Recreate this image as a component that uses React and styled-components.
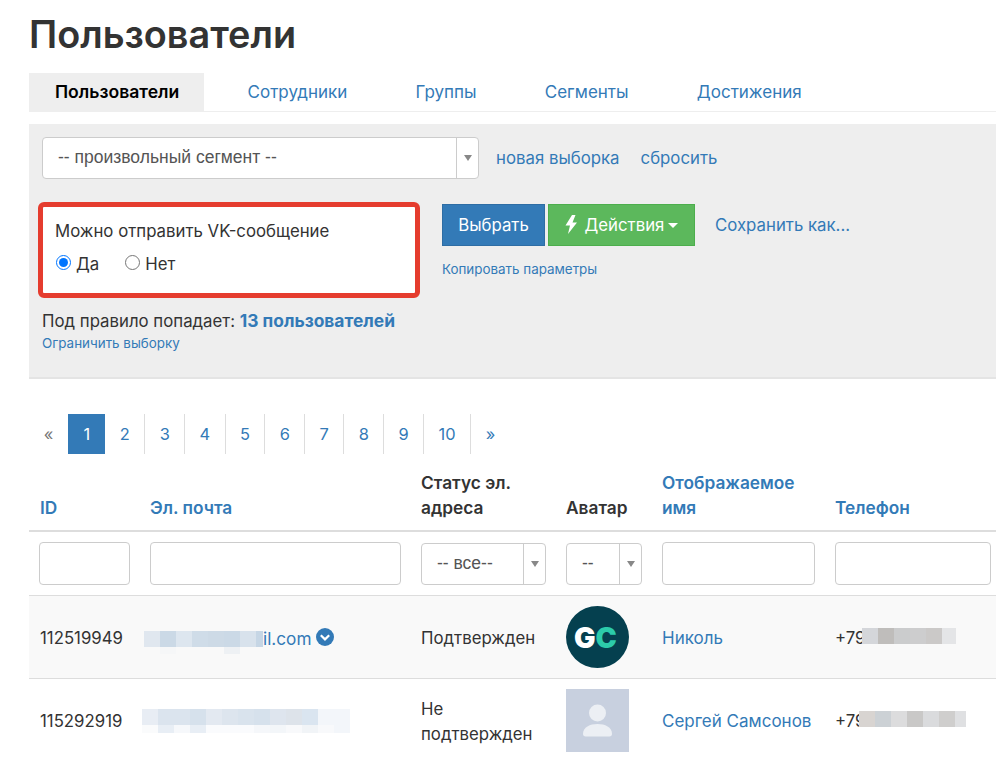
import React from 'react'
import styled, { createGlobalStyle } from 'styled-components'

const TABS = ['Пользователи', 'Сотрудники', 'Группы', 'Сегменты', 'Достижения']
const PAGES = ['1', '2', '3', '4', '5', '6', '7', '8', '9', '10']

const EMAIL_ONE = [
  ['#e0e7ef', '#cbd9e6', '#dde6ef', '#cfdce8', '#cddae6', '#cbd9e6', '#d8e2ec', '#c6d6e5'],
  [null, '#f6f7f8', null, null, null, '#eef1f4', null, null],
]
const EMAIL_TWO = [
  ['#e8edf4', '#dbe4ee', '#dbe4ee', '#d6e1ec', '#e3e9f1', '#dde5ee', '#d9e3ed', '#d6e1ec', '#dee5ee', '#dde3ea', '#dae5f0', '#f3f6fa', '#f3f6fa'],
  ['#fafbfc', '#e8eef5', '#f6f8fb', '#e8eef5', '#fafbfd', '#fafbfd', '#fafbfd', '#f5f7fa', '#f3f6f9', '#f8f9fb', '#f1f4f7', '#f8f9fb', '#f3f6fa'],
]
const PHONE_ONE = [['#d4d6da', '#bfbdbb', '#cbcccd', '#cdcdce', '#cbc9c8', '#e4e5e7']]
const PHONE_TWO = [['#d8d4d1', '#ccd1d5', '#dcdcdd', '#c9c8c7', '#dadbdd', '#cfcecd', '#dfe0e2']]

// pixelated patches over personal data
const Mosaic = ({ rows, width, height }) => (
  <svg width={width} height={height}>
    {rows.map((row, y) =>
      row.map((color, x) =>
        color ? (
          <rect key={x} x={x * 16} y={y * 16} width={16} height={16} fill={color} />
        ) : null
      )
    )}
  </svg>
)

const Select = ({ label, width }) => (
  <SelectBox $width={width}>
    <SelectValue>{label}</SelectValue>
    <SelectArrow />
  </SelectBox>
)

const App = () => (
  <Page>
    <GlobalStyle />
    <Title>Пользователи</Title>
    <Tabs>
      {TABS.map((tab, i) => (
        <Tab key={tab} $active={i === 0}>
          {tab}
        </Tab>
      ))}
    </Tabs>

    <FilterPanel>
      <SegmentRow>
        <Select label='-- произвольный сегмент --' width='437px' />
        <PlainLink>новая выборка</PlainLink>
        <PlainLink>сбросить</PlainLink>
      </SegmentRow>
      <RuleRow>
        <RuleBox>
          <RuleName>Можно отправить VK-сообщение</RuleName>
          <RadioRow>
            <RadioLabel>
              <Radio name='vk' defaultChecked /> Да
            </RadioLabel>
            <RadioLabel>
              <Radio name='vk' /> Нет
            </RadioLabel>
          </RadioRow>
        </RuleBox>
        <div>
          <Buttons>
            <Button $bg='#337ab7' $border='#2e6da4' $width='103px'>
              Выбрать
            </Button>
            <Button $bg='#5cb85c' $border='#4cae4c' $width='147px'>
              <BoltIcon viewBox='0 0 12 19'>
                <path d='M7 0L.5 10.500H5L3 19l9-11.500H7.500L10.500 0z' fill='#fff' />
              </BoltIcon>
              Действия
              <Caret />
            </Button>
            <SaveLink>Сохранить как...</SaveLink>
          </Buttons>
          <SmallLink>Копировать параметры</SmallLink>
        </div>
      </RuleRow>
      <Summary>
        Под правило попадает: <b>13 пользователей</b>
      </Summary>
      <SmallLink>Ограничить выборку</SmallLink>
    </FilterPanel>

    <Pagination>
      <PageEdge>«</PageEdge>
      {PAGES.map(p => (
        <PageItem key={p} $active={p === '1'}>
          {p}
        </PageItem>
      ))}
      <PageEdge>»</PageEdge>
    </Pagination>

    <Table>
      <colgroup>
        <col width='111' />
        <col width='271' />
        <col width='145' />
        <col width='96' />
        <col width='173' />
        <col width='176' />
      </colgroup>
      <thead>
        <tr>
          <Th $link>ID</Th>
          <Th $link>Эл. почта</Th>
          <Th>Статус эл. адреса</Th>
          <Th>Аватар</Th>
          <Th $link>Отображаемое имя</Th>
          <Th $link>Телефон</Th>
        </tr>
        <tr>
          <Td><FilterInput /></Td>
          <Td><FilterInput /></Td>
          <Td><Select label='-- все--' width='125px' /></Td>
          <Td><Select label='--' width='76px' /></Td>
          <Td><FilterInput /></Td>
          <Td><FilterInput /></Td>
        </tr>
      </thead>
      <tbody>
        <Row $striped>
          <BodyTd>112519949</BodyTd>
          <BodyTd>
            <EmailCell>
              <EmailPatch>
                <Mosaic rows={EMAIL_ONE} width={119} height={23} />
              </EmailPatch>
              il.com
              <VerifiedIcon viewBox='0 0 18 18'>
                <circle cx='9' cy='9' r='9' fill='#337ab7' />
                <path d='M4.800 7.200l4.200 4.200 4.200-4.200' fill='none' stroke='#fff' strokeWidth='2.200' />
              </VerifiedIcon>
            </EmailCell>
          </BodyTd>
          <BodyTd>Подтвержден</BodyTd>
          <Td>
            <LogoAvatar viewBox='0 0 63 62'>
              <ellipse cx='31.500' cy='31' rx='31.500' ry='31' fill='#05404f' />
              <LogoText x='8' y='41.500' fill='#fff'>
                G<tspan fill='#2ccbaa'>C</tspan>
              </LogoText>
            </LogoAvatar>
          </Td>
          <BodyTd><NameLink>Николь</NameLink></BodyTd>
          <BodyTd>
            <PhoneCell>
              +79
              <PhonePatch $left='27px'>
                <Mosaic rows={PHONE_ONE} width={94} height={16} />
              </PhonePatch>
            </PhoneCell>
          </BodyTd>
        </Row>
        <Row>
          <BodyTd>115292919</BodyTd>
          <BodyTd>
            <EmailCell $offset='-8px'>
              <EmailPatch $top='0'>
                <Mosaic rows={EMAIL_TWO} width={208} height={24} />
              </EmailPatch>
            </EmailCell>
          </BodyTd>
          <BodyTd>Не подтвержден</BodyTd>
          <Td>
            <BlankAvatar viewBox='0 0 63 63'>
              <rect width='63' height='63' fill='#c8d0df' />
              <circle cx='31.500' cy='24' r='8.500' fill='#eceff4' />
              <path d='M17 45c0-7 7-10 14.500-10S46 38 46 45c0 1.500-1 2.500-2.500 2.500h-24C18 47.500 17 46.500 17 45z' fill='#eceff4' />
            </BlankAvatar>
          </Td>
          <BodyTd><NameLink>Сергей Самсонов</NameLink></BodyTd>
          <BodyTd>
            <PhoneCell>
              +79
              <PhonePatch $left='24px'>
                <Mosaic rows={PHONE_TWO} width={107} height={16} />
              </PhonePatch>
            </PhoneCell>
          </BodyTd>
        </Row>
      </tbody>
    </Table>
  </Page>
)

const GlobalStyle = createGlobalStyle`
  html, body {
    margin: 0;
    height: 762px;
    overflow: hidden;
    background: #fff;
  }
  body {
    font-family: Inter, 'Noto Sans', sans-serif;
    font-size: 16.8px;
    color: #333;
  }
`

const Page = styled.div`
  width: 1001px;
  padding: 0 0 0 29px;
  box-sizing: border-box;
`

const Title = styled.h1`
  margin: 0;
  padding-top: 10px;
  font-size: 37.800px;
  line-height: 48px;
  font-weight: 600;
  color: #333;
`

const Tabs = styled.div`
  display: flex;
  gap: 18.250px;
  height: 38px;
  margin-top: 15px;
  border-bottom: 1px solid #eee;
`

const Tab = styled.div`
  padding: 0 25px 0 ${props => (props.$active ? '26px' : '25px')};
  line-height: 38px;
  color: ${props => (props.$active ? '#000' : '#337ab7')};
  background: ${props => (props.$active ? '#eee' : 'transparent')};
  font-size: ${props => (props.$active ? '17.600px' : '17px')};
  font-weight: ${props => (props.$active ? 600 : 400)};
`

const FilterPanel = styled.div`
  height: 255px;
  box-sizing: border-box;
  margin-top: 12px;
  padding: 13px;
  background: #eee;
  border-bottom: 2px solid #e4e4e4;
`

const SegmentRow = styled.div`
  display: flex;
  align-items: center;
  gap: 21px;
  & > :first-child {
    margin-right: -4px;
  }
`

const PlainLink = styled.a`
  color: #337ab7;
`

const SelectBox = styled.div`
  display: flex;
  width: ${props => props.$width};
  height: 42px;
  box-sizing: border-box;
  background: #fff;
  border: 1px solid #ccc;
  border-radius: 4px;
`

const SelectValue = styled.div`
  flex: 1;
  padding-left: 15px;
  font-family: 'Liberation Sans', Arial, sans-serif;
  font-size: 17.500px;
  line-height: 39px;
  color: #555;
  white-space: nowrap;
`

const SelectArrow = styled.div`
  display: flex;
  flex: 0 0 21px;
  align-items: center;
  justify-content: center;
  border-left: 1px solid #ccc;
  &::after {
    content: '';
    border-style: solid;
    border-width: 6px 4px 0;
    border-color: #888 transparent transparent;
  }
`

const RuleRow = styled.div`
  display: flex;
  align-items: flex-start;
  margin: 23px 0 0 -4px;
`

const RuleBox = styled.div`
  width: 382px;
  height: 96px;
  box-sizing: border-box;
  margin-right: 22px;
  padding: 12px 12px;
  background: #fff;
  border: 5px solid #e53c2e;
  border-radius: 6px;
`

const RuleName = styled.div`
  line-height: 24px;
  color: #333;
`

const RadioRow = styled.div`
  display: flex;
  gap: 25px;
  margin-top: 9px;
`

const RadioLabel = styled.label`
  display: flex;
  align-items: center;
  gap: 5px;
  line-height: 24px;
`

const Radio = styled.input.attrs({ type: 'radio' })`
  width: 15px;
  height: 15px;
  margin: 0 0 3px 1px;
`

const Buttons = styled.div`
  display: flex;
  align-items: center;
  gap: 3px;
  margin-top: 2px;
`

const Button = styled.button`
  display: flex;
  align-items: center;
  justify-content: center;
  gap: 5px;
  width: ${props => props.$width};
  height: 42px;
  padding: 0;
  font: inherit;
  color: #fff;
  background: ${props => props.$bg};
  border: 1px solid ${props => props.$border};
`

const BoltIcon = styled.svg`
  width: 12px;
  height: 19px;
  margin: -2px 3px 0 0;
`

const Caret = styled.span`
  margin-left: -1px;
  border-style: solid;
  border-width: 5px 5px 0;
  border-color: #fff transparent transparent;
`

const SaveLink = styled.a`
  margin-left: 17px;
  color: #337ab7;
`

const SmallLink = styled.a`
  display: block;
  margin-top: 14px;
  font-size: 13.400px;
  line-height: 18px;
  color: #337ab7;
`

const Summary = styled.div`
  margin-top: 11px;
  line-height: 24px;
  & b {
    font-size: 17.400px;
    font-weight: 700;
    color: #337ab7;
  }
  & + a {
    margin-top: 1px;
  }
`

const Pagination = styled.div`
  display: flex;
  height: 40px;
  margin-top: 35px;
  font-size: 16.400px;
`

const PageEdge = styled.div`
  width: 39px;
  line-height: 41px;
  text-align: center;
  color: #777;
  &:last-child {
    color: #337ab7;
  }
`

const PageItem = styled.div`
  padding: 0 ${props => (props.$active ? '15.400px' : '14.400px')};
  line-height: 41px;
  color: ${props => (props.$active ? '#fff' : '#337ab7')};
  background: ${props => (props.$active ? '#337ab7' : 'transparent')};
  border-right: ${props => (props.$active ? 'none' : '1px solid #ddd')};
`

const Table = styled.table`
  width: 972px;
  margin-top: 16px;
  table-layout: fixed;
  border-collapse: collapse;
`

const Th = styled.th`
  padding: 0 10px 10px;
  font-size: 17.300px;
  line-height: 25px;
  text-align: left;
  vertical-align: bottom;
  font-weight: 600;
  color: ${props => (props.$link ? '#337ab7' : '#333')};
  border-bottom: 2px solid #ddd;
  &:first-child {
    padding-left: 11px;
  }
`

const Td = styled.td`
  padding: 10px;
  line-height: 25px;
  vertical-align: middle;
  border-bottom: 1px solid #ddd;
`

const BodyTd = styled(Td)`
  padding: 11px 10px 9px;
  &:first-child {
    padding-left: 11px;
  }
`

const Row = styled.tr`
  background: ${props => (props.$striped ? '#f9f9f9' : 'transparent')};
`

const FilterInput = styled.input`
  display: block;
  width: 100%;
  height: 43px;
  box-sizing: border-box;
  background: #fff;
  border: 1px solid #ccc;
  border-radius: 4px;
`

const EmailCell = styled.div`
  display: flex;
  align-items: center;
  height: 25px;
  margin-left: ${props => props.$offset || '-6px'};
  font-size: 17.200px;
  color: #337ab7;
`

const EmailPatch = styled.div`
  flex: none;
  align-self: flex-start;
  height: 25px;
  margin-top: ${props => props.$top || '5px'};
  & svg {
    display: block;
  }
`

const PhoneCell = styled.div`
  position: relative;
  height: 25px;
`

const PhonePatch = styled.div`
  position: absolute;
  top: 2px;
  left: ${props => props.$left};
  display: flex;
`

const VerifiedIcon = styled.svg`
  width: 18px;
  height: 18px;
  margin: 0 0 3px 5px;
`

const LogoAvatar = styled.svg`
  display: block;
  width: 63px;
  height: 62px;
`

const LogoText = styled.text`
  font-family: Inter, sans-serif;
  font-size: 28.500px;
  font-weight: 900;
`

const BlankAvatar = styled.svg`
  display: block;
  width: 63px;
  height: 63px;
`

const NameLink = styled.a`
  font-size: 17px;
  color: #337ab7;
`

export default App
